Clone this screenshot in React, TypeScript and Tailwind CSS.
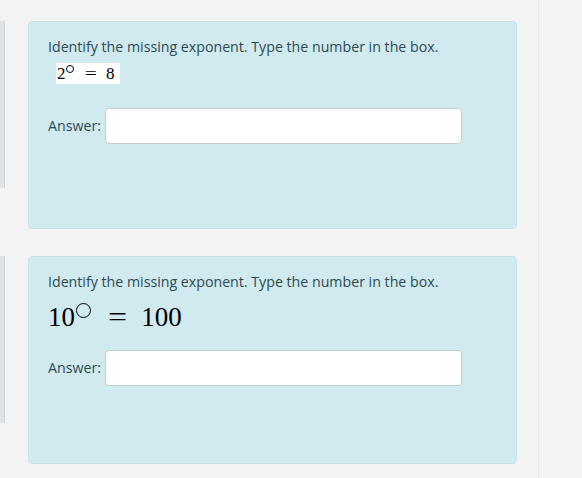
import React from "react";

function Stub() {
  return <div className="h-[167px] w-[5px] shrink-0 border-r border-[#cfd3d6] bg-[#e0e3e6]" />;
}

function Card({ small, base, result }: { small: boolean; base: string; result: string }) {
  return (
    <div className="h-[208px] w-[489px] rounded-[4px] border border-[#c4e4ea] bg-[#d1eaf0] px-[19px] pt-[14px] text-[#2c4b52]">
      <div className="text-[14.2px] leading-[22px]">Identify the missing exponent. Type the number in the box.</div>
      {small ? (
        <div className="ml-[8px] mt-[5px] inline-flex h-[21px] w-[64px] items-center bg-white pl-[1px] font-['Liberation_Serif',serif] text-[17px] leading-none text-black">
          <span>{base}</span>
          <span className="mb-[9px] inline-block h-[8px] w-[8px] rounded-full border border-black" />
          <span className="ml-[12px] scale-x-125">=</span>
          <span className="ml-[11px]">{result}</span>
        </div>
      ) : (
        <div className="mt-[8px] flex h-[32px] items-center font-['Liberation_Serif',serif] text-[27px] leading-none text-black">
          <span>{base}</span>
          <span className="mb-[14px] ml-[1px] inline-block h-[15px] w-[15px] rounded-full border border-black" />
          <span className="ml-[19px] scale-x-125">=</span>
          <span className="ml-[16px]">{result}</span>
        </div>
      )}
      <div className={`flex items-center ${small ? "mt-[23px]" : "mt-[17px]"}`}>
        <span className="w-[57px] text-[14.2px]">Answer:</span>
        <input className="h-[36px] w-[357px] rounded-[4px] border border-[#c9cdd0] bg-white outline-none" />
      </div>
    </div>
  );
}

export default function App() {
  return (
    <div className="flex h-[478px] w-[582px] bg-[#f3f3f3] font-['Open_Sans',sans-serif]">
      <div className="flex w-[538px] flex-col gap-[27px] pt-[21px]">
        <div className="flex gap-[23px]">
          <Stub />
          <Card small base="2" result="8" />
        </div>
        <div className="flex gap-[23px]">
          <Stub />
          <Card small={false} base="10" result="100" />
        </div>
      </div>
      <div className="h-full w-[44px] border-l border-[#e9e9e9] bg-[#f4f4f4]" />
    </div>
  );
}
